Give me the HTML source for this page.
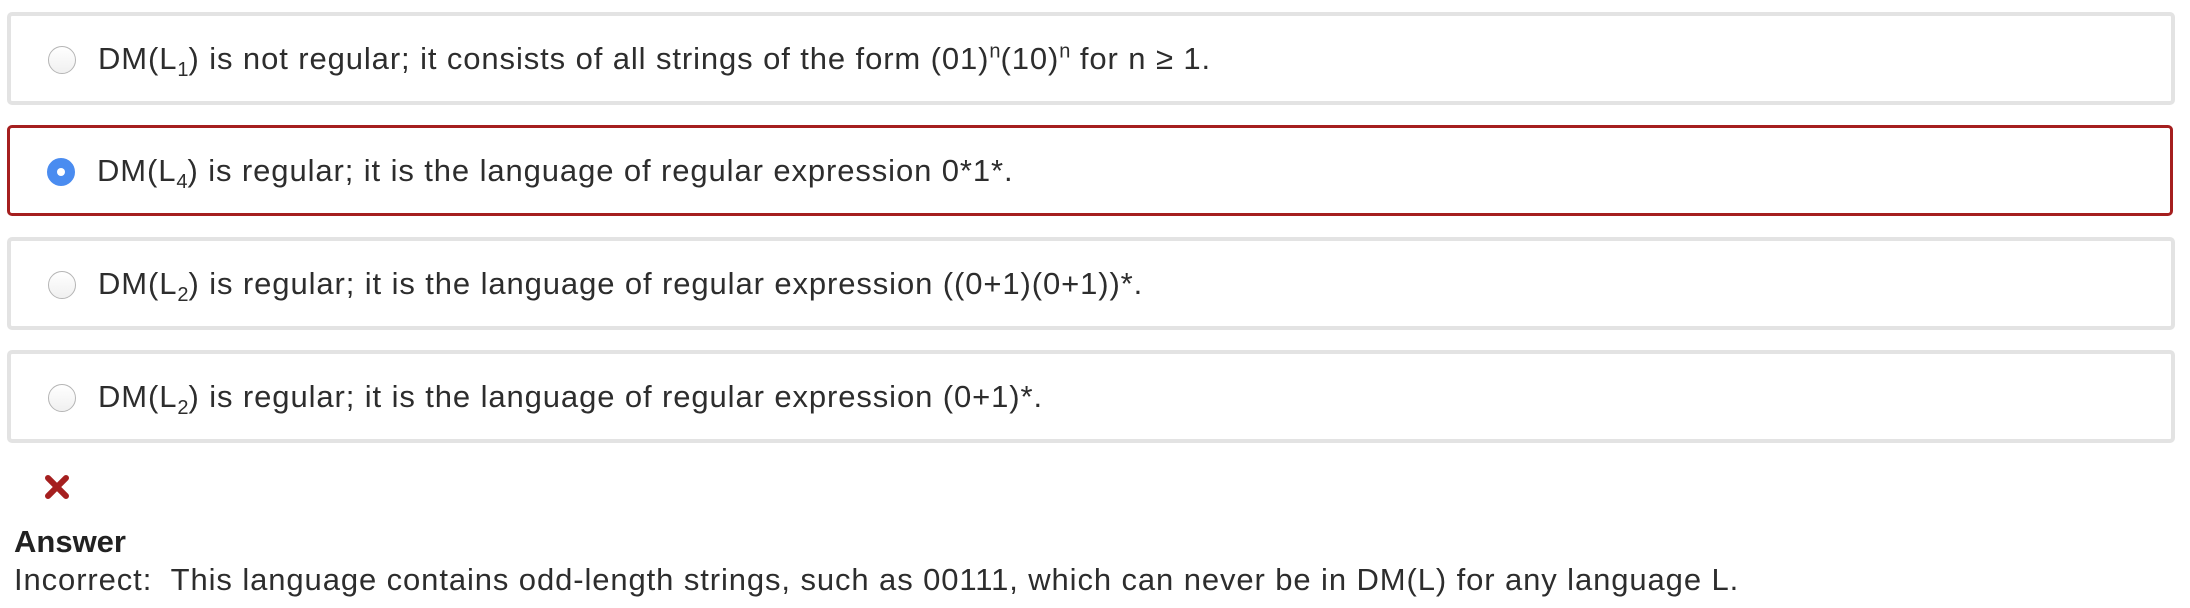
<!DOCTYPE html>
<html><head><meta charset="utf-8"><style>
body{margin:0;width:2190px;height:608px;background:#fff;font-family:"Liberation Sans",sans-serif;color:#2d2d2d;position:relative;overflow:hidden}
.box{position:absolute;left:7px;width:2160px;height:85px;border:4px solid #e3e3e3;border-radius:5px;box-sizing:content-box}
.box.sel{border-color:#a51f1f;border-width:3px}
.r{position:absolute;left:37px;top:30px;width:28px;height:28px;border-radius:50%;border:1px solid #b5b5b5;background:linear-gradient(#fff,#f0f0f0);box-sizing:border-box}
.r.on{background:#4a8cf0;border-color:#4a8cf0}
.r.on:after{content:"";position:absolute;left:9px;top:9px;width:8px;height:8px;border-radius:50%;background:#fff}
.t{position:absolute;left:87px;top:24px;font-size:31px;letter-spacing:0.9px;line-height:38px;white-space:nowrap}
sub,sup{font-size:20px;line-height:0;letter-spacing:0}
</style></head><body>
<div class="box" style="top:12px"><div class="r"></div><div class="t">DM(L<sub>1</sub>) is not regular; it consists of all strings of the form (01)<sup>n</sup>(10)<sup>n</sup> for n ≥ 1.</div></div>
<div class="box sel" style="top:125px"><div class="r on"></div><div class="t">DM(L<sub>4</sub>) is regular; it is the language of regular expression 0*1*.</div></div>
<div class="box" style="top:237px"><div class="r"></div><div class="t">DM(L<sub>2</sub>) is regular; it is the language of regular expression ((0+1)(0+1))*.</div></div>
<div class="box" style="top:350px"><div class="r"></div><div class="t">DM(L<sub>2</sub>) is regular; it is the language of regular expression (0+1)*.</div></div>
<svg style="position:absolute;left:44px;top:474px" width="26" height="26" viewBox="0 0 26 26"><path d="M4 4L22 22M22 4L4 22" stroke="#a51f1f" stroke-width="6" stroke-linecap="round"/></svg>
<div style="position:absolute;left:14px;top:524px;font-size:31px;font-weight:bold;color:#222">Answer</div>
<div style="position:absolute;left:14px;top:562px;font-size:31px;letter-spacing:0.9px;white-space:nowrap">Incorrect:&nbsp; This language contains odd-length strings, such as 00111, which can never be in DM(L) for any language L.</div>
</body></html>
